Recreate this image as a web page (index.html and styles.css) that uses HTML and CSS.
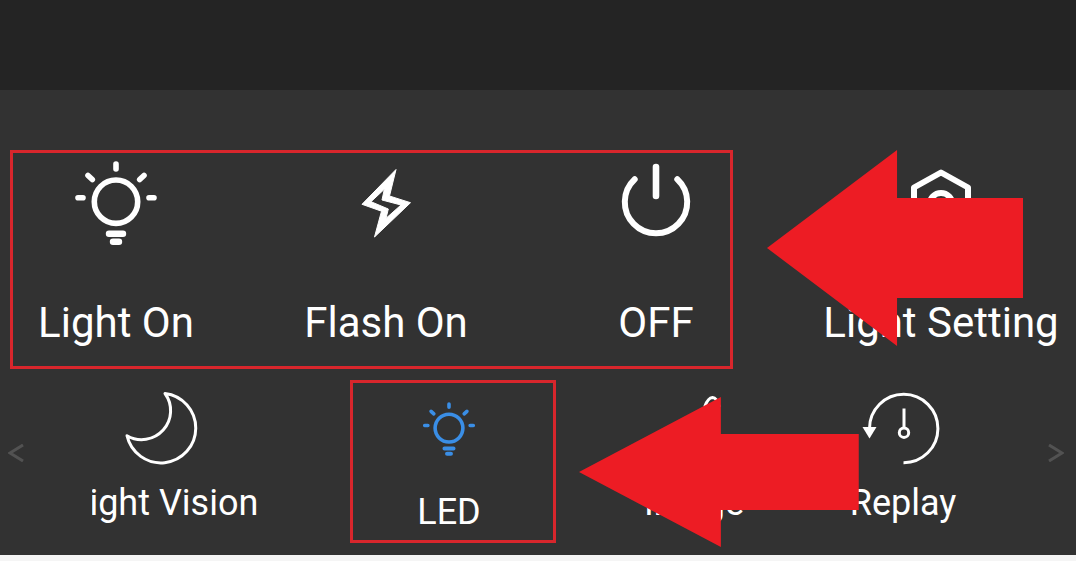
FILE: index.html
```html
<!DOCTYPE html>
<html lang="en">
<head>
  <meta charset="UTF-8">
  <meta name="viewport" content="width=device-width, initial-scale=1.0">
  <title>LED Light Controls</title>
  <link rel="stylesheet" href="styles.css">
</head>
<body>
  <!-- Shared bulb icon -->
  <svg class="sprite" aria-hidden="true">
    <symbol id="bulb" viewBox="0 0 96 100">
      <g fill="none" stroke="currentColor" stroke-width="5.6" stroke-linecap="round">
        <circle cx="48" cy="51.7" r="21.7"/>
        <path d="M48 14v5M10 47.7h5M81 47.7h5M20 25.5l4.3 4M76 25.5l-4.3 4"/>
        <path stroke-width="6.4" d="M41 83.7h14M45 91.7h6"/>
      </g>
    </symbol>
  </svg>

  <div class="video-area"></div>

  <main class="panel">
    <!-- Light modes -->
    <section class="modes">
      <button class="mode">
        <svg class="mode-icon" aria-hidden="true"><use href="#bulb"/></svg>
        <span class="mode-label">Light On</span>
      </button>
      <button class="mode">
        <svg class="mode-icon" viewBox="0 0 96 100" aria-hidden="true">
          <path fill="currentColor" stroke="currentColor" stroke-linejoin="round" fill-rule="evenodd" d="M58 19.5 24 54.3 43.5 61.2 36.5 87 72.5 52.7 51.5 46ZM46.3 39.3 33 51.7 50.3 59 48 68.3 63 55 44 50Z"/>
        </svg>
        <span class="mode-label">Flash On</span>
      </button>
      <button class="mode">
        <svg class="mode-icon" viewBox="0 0 96 100" aria-hidden="true">
          <g fill="none" stroke="currentColor" stroke-width="6" stroke-linecap="round">
            <path d="M26.7 29.3A31.2 31.2 0 1 0 69.3 29.3"/>
            <path stroke-width="6.6" d="M48 17v29"/>
          </g>
        </svg>
        <span class="mode-label">OFF</span>
      </button>
      <button class="mode">
        <svg class="mode-icon" viewBox="0 0 96 100" aria-hidden="true">
          <g fill="none" stroke="currentColor" stroke-width="6" stroke-linejoin="round">
            <path d="M48 22.5 75 37.5V70.5L48 86.5 21 70.5V37.5Z"/>
            <circle cx="48" cy="54.5" r="11.5"/>
          </g>
        </svg>
        <span class="mode-label">Light Setting</span>
      </button>

      <div class="mark mark-modes"></div>
      <svg class="pointer pointer-modes" viewBox="0 0 256 196" preserveAspectRatio="none" aria-hidden="true">
        <path d="M0 98 130 0V48H256V148H130V196Z"/>
      </svg>
    </section>

    <!-- Bottom toolbar -->
    <nav class="toolbar">
      <button class="nav-arrow nav-prev" aria-label="Previous">
        <svg width="16" height="18" viewBox="0 0 16 18"><path d="M15 1 2 9l13 8"/></svg>
      </button>
      <button class="tool tool-scrolled">
        <svg class="tool-icon" viewBox="0 0 88 80" aria-hidden="true">
          <path d="M48 5.5A34.8 34.8 0 1 1 10 47.7A29 29 0 0 0 48 5.5Z"/>
        </svg>
        <span class="tool-label">Night Vision</span>
      </button>
      <button class="tool tool-active">
        <svg class="tool-icon" aria-hidden="true"><use href="#bulb"/></svg>
        <span class="tool-label">LED</span>
      </button>
      <button class="tool">
        <svg class="tool-icon" viewBox="0 0 88 80" aria-hidden="true">
          <path d="M55 18Q58 10 62.500 9.500Q67 10 69 18L62 26Z"/>
          <path d="M16 66 36 38l12 16 8-9 14 21Z"/>
        </svg>
        <span class="tool-label">Image</span>
      </button>
      <button class="tool">
        <svg class="tool-icon" viewBox="0 0 88 80" aria-hidden="true">
          <path d="M44.5 74.7A34.2 34.2 0 1 0 10.5 40.5"/>
          <path class="solid" d="M3.5 39h14L10.5 50.5Z"/>
          <path d="M45 20.5v19"/>
          <circle cx="45" cy="44.7" r="4.7"/>
        </svg>
        <span class="tool-label">Replay</span>
      </button>
      <button class="nav-arrow nav-next" aria-label="Next">
        <svg width="16" height="18" viewBox="0 0 16 18"><path d="M1 1l13 8L1 17"/></svg>
      </button>

      <div class="mark mark-led"></div>
      <svg class="pointer pointer-led" viewBox="0 0 280 150" preserveAspectRatio="none" aria-hidden="true">
        <path d="M0 75 142 0V37H280V113H142V150Z"/>
      </svg>
    </nav>
  </main>
</body>
</html>
```
FILE: styles.css
```css
* {
  box-sizing: border-box;
}

body {
  margin: 0;
  background: #f5f5f5;
  font-family: Roboto, "Liberation Sans", sans-serif;
  color: #fff;
}

button {
  margin: 0;
  padding: 0;
  border: none;
  background: none;
  color: inherit;
  font-family: inherit;
  cursor: pointer;
}

.sprite {
  position: absolute;
  width: 0;
  height: 0;
}

.video-area {
  height: 90px;
  background: #242424;
}

.panel {
  padding-top: 60px;
  background: #323232;
}

/* Light modes */
.modes {
  position: relative;
  display: grid;
  grid-template-columns: 232fr 232fr 232fr 262fr;
  column-gap: 38px;
  padding: 0 4px 33px 0;
}

.mode {
  display: flex;
  flex-direction: column;
  align-items: center;
  gap: 49px;
  min-width: 0;
}

.mode-icon {
  width: 96px;
  height: 100px;
}

.mode-label {
  font-size: 42px;
  line-height: 48px;
  white-space: nowrap;
}

/* Bottom toolbar */
.toolbar {
  position: relative;
  display: grid;
  grid-template-columns: 92fr 138fr 116fr 206fr 284fr 134fr 106fr;
  padding-bottom: 22px;
}

.tool {
  display: flex;
  flex-direction: column;
  align-items: center;
  gap: 14px;
  min-width: 0;
  padding-top: 8px;
}

/* label runs past the left edge of the list */
.tool-scrolled {
  clip-path: inset(0 -60px 0 0);
}

.tool-active {
  grid-column: 4;
  gap: 32px;
  padding-top: 15px;
}

.tool-icon {
  width: 88px;
  height: 80px;
  flex-shrink: 0;
  fill: none;
  stroke: #fff;
  stroke-width: 3;
  stroke-linejoin: round;
}

.tool-icon .solid {
  fill: #fff;
  stroke: none;
}

.tool-active .tool-icon {
  width: 62px;
  height: 64px;
  color: #3a8ee6;
}

.tool-label {
  font-size: 36px;
  line-height: 42px;
  white-space: nowrap;
}

.nav-arrow {
  display: flex;
  align-items: center;
  padding: 0 8px;
  padding-bottom: 8px;
}

.nav-next {
  justify-content: flex-end;
  padding-right: 12px;
}

.nav-arrow path {
  fill: none;
  stroke: #525252;
  stroke-width: 3;
}

/* Red highlights */
.mark {
  position: absolute;
  border: 3px solid #d8262c;
  pointer-events: none;
}

.mark-modes {
  top: 0;
  left: 0.9%;
  width: 67.2%;
  height: 219px;
}

.mark-led {
  top: 0;
  left: 32.5%;
  width: 19.2%;
  height: 163px;
}

.pointer {
  position: absolute;
  fill: #ed1c24;
  pointer-events: none;
}

.pointer-modes {
  top: 0;
  left: 71.3%;
  width: 23.8%;
  height: 196px;
}

.pointer-led {
  top: 17px;
  left: 53.8%;
  width: 26%;
  height: 150px;
}
```
